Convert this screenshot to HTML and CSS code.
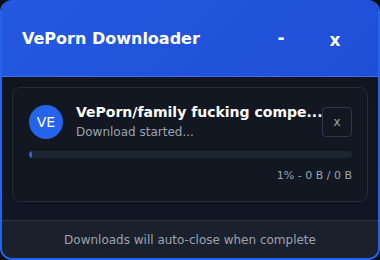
FILE: index.html
```html
<!DOCTYPE html>
<html>
<head>
<meta charset="utf-8">
<link rel="stylesheet" href="styles.css">
</head>
<body>
<div class="window">
  <header class="header">
    <h1 class="title">VePorn Downloader</h1>
    <div class="controls">
      <button class="ctrl min">-</button>
      <button class="ctrl close">x</button>
    </div>
  </header>
  <main class="content">
    <div class="card">
      <div class="row">
        <div class="avatar">VE</div>
        <div class="info">
          <div class="name">VePorn/family fucking compe...</div>
          <div class="status">Download started...</div>
        </div>
        <button class="cancel">x</button>
      </div>
      <div class="bar"><div class="fill" style="width:1%"></div></div>
      <div class="meta">1% - 0 B / 0 B</div>
    </div>
  </main>
  <footer class="footer">Downloads will auto-close when complete</footer>
</div>
</body>
</html>
```
FILE: styles.css
```css
* { box-sizing: border-box; }
html, body { margin: 0; padding: 0; background: #0b0f17; }
body { font-family: "DejaVu Sans", sans-serif; }
.window {
  width: 380px; height: 260px;
  border: 2px solid #2563eb;
  border-top: none;
  border-radius: 12px;
  overflow: hidden;
  background: #111622;
  display: flex; flex-direction: column;
}
.header {
  height: 77px;
  flex: none;
  background: linear-gradient(135deg, #2458e0, #1f4fd6);
  border-bottom: 1px solid #3a6cf0;
  display: flex; align-items: center; justify-content: space-between;
  padding: 0 30px 0 22px;
  margin: 0 -2px;
}
.title { margin: 0; font-size: 16px; font-weight: bold; color: #fff; }
.controls { display: flex; gap: 24px; align-items: center; }
.ctrl {
  background: none; border: none; color: #fff; font-family: inherit;
  font-size: 17px; font-weight: bold; width: 30px; padding: 0; cursor: pointer;
}
.close { margin-top: 3px; }
.content { flex: 1; padding: 10px 10px; background: linear-gradient(180deg, #111520, #111624); }
.card {
  border: 1px solid #252b37;
  border-radius: 8px;
  background: #121722;
  padding: 16px 15px 19px 16px;
}
.row { display: flex; align-items: center; gap: 13px; }
.avatar {
  width: 34px; height: 34px; border-radius: 50%;
  background: #2563eb; color: #fff;
  display: flex; align-items: center; justify-content: center;
  font-size: 14px; flex: none;
}
.info { flex: 1; min-width: 0; }
.name { color: #fff; font-weight: bold; font-size: 14px; white-space: nowrap; }
.status { color: #9ca3af; font-size: 12px; margin-top: 5px; }
.cancel {
  width: 30px; height: 30px; flex: none;
  background: transparent; border: 1px solid #2f3645; border-radius: 4px;
  color: #9ca3af; font-family: inherit; font-size: 12px; padding: 0;
}
.bar { height: 7px; background: #1e2532; border-radius: 4px; margin-top: 12px; overflow: hidden; }
.fill { height: 100%; background: #2563eb; border-radius: 4px; }
.meta { text-align: right; color: #9ca3af; font-size: 11px; margin-top: 11px; }
.footer {
  height: 38px; flex: none;
  background: #1a202c;
  border-top: 1px solid #2b3240;
  color: #9ca3af; font-size: 12px;
  display: flex; align-items: center; justify-content: center;
}
```
